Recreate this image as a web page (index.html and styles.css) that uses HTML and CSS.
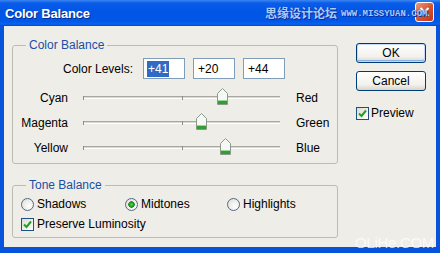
FILE: index.html
```html
<!DOCTYPE html>
<html lang="en">

<head>
    <meta charset="UTF-8">
    <meta name="viewport" content="width=device-width, initial-scale=1.0">
    <title>Color Balance</title>
    <link rel="stylesheet" href="styles.css">
</head>

<body>
    <svg class="defs" width="0" height="0">
        <symbol id="thumb" viewBox="0 0 11 17">
            <path d="M5.5 .5 10.5 5.5V16.5H.5V5.5Z" fill="#f5f8f5" stroke="#8b998b" />
            <path d="M1 13h9v3H1z" fill="#2f9f2f" />
            <path d="M1 12h9v1H1z" fill="#9fd49f" />
        </symbol>
        <symbol id="tick" viewBox="0 0 11 11">
            <path d="M2 5.5 4.5 8 9 2.5" fill="none" stroke="#21a121" stroke-width="2" />
        </symbol>
    </svg>
    <div class="window">
        <div class="titlebar">
            <span class="title">Color Balance</span>
            <span class="close">
                <svg width="17" height="18" viewBox="0 0 17 18">
                    <path d="M4.5 5 12.5 13M12.5 5 4.5 13" stroke="#fff" stroke-width="2" />
                </svg>
            </span>
        </div>
        <!--site watermark over the title bar-->
        <div class="mark-top"><span class="cn">思缘设计论坛</span><span class="en">WWW.MISSYUAN.COM</span></div>
        <div class="frame">
            <div class="left">
                <fieldset class="group">
                    <legend>Color Balance</legend>
                    <div class="levels">
                        <span class="levels-label">Color Levels:</span>
                        <span class="field"><span class="sel">+41</span></span>
                        <span class="field">+20</span>
                        <span class="field">+44</span>
                    </div>
                    <div class="sliders">
                        <span class="lbl-l">Cyan</span>
                        <span class="track"><svg class="thumb" style="left:70.5%"><use href="#thumb" /></svg></span>
                        <span class="lbl-r">Red</span>
                        <span class="lbl-l">Magenta</span>
                        <span class="track"><svg class="thumb" style="left:60%"><use href="#thumb" /></svg></span>
                        <span class="lbl-r">Green</span>
                        <span class="lbl-l">Yellow</span>
                        <span class="track"><svg class="thumb" style="left:72%"><use href="#thumb" /></svg></span>
                        <span class="lbl-r">Blue</span>
                    </div>
                </fieldset>
                <fieldset class="group tone">
                    <legend>Tone Balance</legend>
                    <div class="radios">
                        <span class="opt"><span class="radio"></span>Shadows</span>
                        <span class="opt"><span class="radio on"></span>Midtones</span>
                        <span class="opt"><span class="radio"></span>Highlights</span>
                    </div>
                    <span class="opt check-row"><span class="check"><svg><use href="#tick" /></svg></span>Preserve Luminosity</span>
                </fieldset>
            </div>
            <div class="right">
                <button type="button" class="btn default">OK</button>
                <button type="button" class="btn">Cancel</button>
                <span class="opt preview"><span class="check"><svg><use href="#tick" /></svg></span>Preview</span>
            </div>
        </div>
        <div class="mark-bottom">OLiHe.COM</div>
    </div>
</body>

</html>
```

FILE: styles.css
```css
body {
    margin: 0;
    font-family: "Liberation Sans", Arial, sans-serif;
    font-size: 12px;
    color: #000;
}

.defs {
    position: absolute;
}

.window {
    position: relative;
    width: 440px;
    height: 253px;
    display: flex;
    flex-direction: column;
    overflow: hidden;
}

.titlebar {
    height: 26px;
    flex: none;
    display: flex;
    justify-content: space-between;
    align-items: center;
    padding-left: 5px;
    background: linear-gradient(#3d86f2 0, #0a5de9 3px, #0055e5 12px, #0057e8 21px, #0b62ef 24px, #0046d2 26px);
}

.title {
    color: #fff;
    font-weight: bold;
    font-size: 13px;
    letter-spacing: -0.2px;
    text-shadow: 1px 1px 0 #0a2a8c;
}

.close {
    align-self: flex-start;
    width: 19px;
    height: 20px;
    margin: 2px 6px 0 0;
    box-sizing: border-box;
    border: 1px solid #fff;
    border-radius: 3px;
    background: linear-gradient(135deg, #ec9a7c, #d5512c 55%, #c0391a);
}

.close svg {
    display: block;
}

.mark-top {
    position: absolute;
    z-index: 1;
    left: 265px;
    top: 5px;
    display: flex;
    align-items: flex-end;
    gap: 4px;
    white-space: nowrap;
    color: #a9ccff;
    text-shadow: 0 0 1px #0b2f9c, 1px 1px 0 #0b2f9c;
}

.cn {
    font-family: "Noto Sans CJK SC", sans-serif;
    font-weight: bold;
    font-size: 12px;
    line-height: 15px;
}

.en {
    font-family: "Liberation Mono", monospace;
    font-weight: bold;
    font-size: 9px;
    line-height: 11px;
}

.frame {
    flex: 1;
    display: flex;
    background-color: #eeede8;
    border: solid #0853dc;
    border-width: 0 4px 6px;
}

.left {
    width: 326px;
    margin-left: 8px;
    padding-top: 12px;
}

.right {
    width: 70px;
    margin-left: 18px;
    padding-top: 17px;
    display: flex;
    flex-direction: column;
}

/* group boxes */

.group {
    margin: 0;
    padding: 0 0 3px;
    min-width: 0;
    border: 1px solid #bdbcb2;
    border-radius: 3px;
}

.group legend {
    margin-left: 13px;
    padding: 0 3px;
    line-height: 14px;
    color: #1b4fa5;
}

.tone {
    margin-top: 14px;
    padding-bottom: 5px;
}

.levels {
    display: flex;
    align-items: center;
    gap: 8px;
    height: 21px;
    margin-top: 6px;
}

.levels-label {
    width: 120px;
    margin-right: 2px;
    text-align: right;
}

.field {
    width: 42px;
    height: 21px;
    box-sizing: border-box;
    border: 1px solid #7f9db9;
    background-color: #fff;
    padding-left: 4px;
    display: flex;
    align-items: center;
}

.sel {
    margin-left: -1px;
    padding: 0 1px;
    line-height: 16px;
    background-color: #316ac5;
    color: #fff;
}

/* sliders */

.sliders {
    display: grid;
    grid-template-columns: 55px 197px auto;
    grid-auto-rows: 25px;
    column-gap: 15px;
    align-items: center;
    margin-top: 6px;
}

.lbl-l {
    text-align: right;
}

.lbl-r {
    padding-left: 1px;
}

.track {
    position: relative;
    height: 3px;
    box-sizing: border-box;
    border-top: 1px solid #a9a89e;
    border-bottom: 1px solid #fff;
    background-color: #dad9d1;
}

.track::before,
.track::after {
    content: "";
    position: absolute;
    top: -1px;
    width: 1px;
    height: 4px;
    background-color: #8f8e86;
}

.track::before {
    left: 0;
}

.track::after {
    left: 50%;
}

.thumb {
    position: absolute;
    top: -9px;
    width: 11px;
    height: 17px;
    margin-left: -5px;
}

/* radios and checkboxes */

.radios {
    display: grid;
    grid-template-columns: 104px 102px auto;
    height: 16px;
    padding: 4px 0 0 8px;
}

.opt {
    display: flex;
    align-items: center;
    gap: 3px;
    height: 16px;
}

.radio {
    width: 13px;
    height: 13px;
    box-sizing: border-box;
    border: 1px solid #4f6a8a;
    border-radius: 50%;
    background: radial-gradient(circle at 65% 65%, #fff, #dcdbd3);
}

.radio.on {
    background: radial-gradient(circle, #62d162 0, #21a121 2px, #1d8f1d 3px, transparent 3.5px), radial-gradient(circle at 65% 65%, #fff, #dcdbd3);
}

.check-row {
    padding-left: 8px;
    margin-top: 4px;
}

.check {
    width: 13px;
    height: 13px;
    box-sizing: border-box;
    border: 1px solid #1c5180;
    background: linear-gradient(135deg, #dcdbd3, #fff);
}

.check svg {
    display: block;
    width: 11px;
    height: 11px;
}

/* buttons */

.btn {
    width: 70px;
    height: 20px;
    padding: 0;
    border: 1px solid #003c74;
    border-radius: 3px;
    background: linear-gradient(#fff, #f2f1ec 70%, #d8d4ca);
    font: inherit;
    color: #000;
}

.btn + .btn {
    margin-top: 8px;
}

.default {
    box-shadow: inset 0 0 0 1px #c4d8f7, inset 0 -1px 0 1px #8aaee6;
}

.preview {
    margin-top: 14px;
    gap: 2px;
}

.mark-bottom {
    position: absolute;
    right: 6px;
    bottom: 2px;
    font-size: 15px;
    letter-spacing: -0.3px;
    color: rgba(255, 255, 255, 0.75);
}
```
